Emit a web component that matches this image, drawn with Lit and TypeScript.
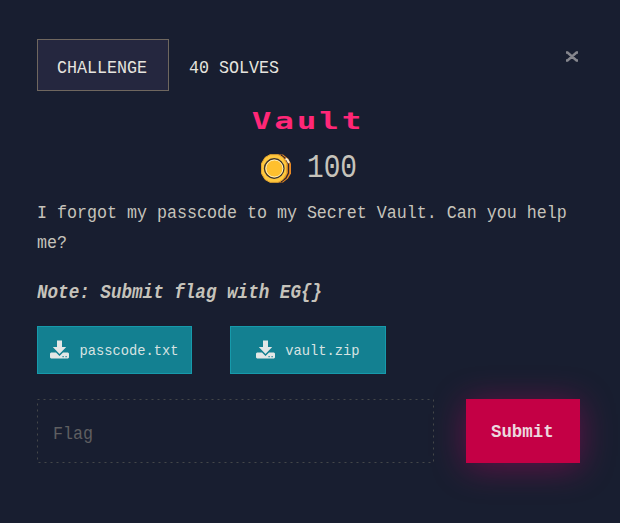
import { LitElement, html, css, svg } from "lit";
import { customElement } from "lit/decorators.js";

@customElement("app-root")
export class AppRoot extends LitElement {
  static styles = css`
    :host {
      display: block;
      box-sizing: border-box;
      width: 620px;
      height: 523px;
      padding: 39px 40px 0 37px;
      overflow: hidden;
      background: #181e30;
      color: #c6c3bb;
      font: 16.67px/30px "Liberation Mono", monospace;
    }
    * { box-sizing: border-box; }
    .tall { display: block; transform: scaleY(1.15); white-space: pre; }
    header { display: flex; height: 52px; align-items: flex-start; color: #e6e4df; }
    .tab { height: 52px; padding-top: 13px; }
    .active { width: 132px; padding-left: 19px; border: 1px solid #6f675f; background: #25273f; }
    .solves { padding: 14px 0 0 20px; flex: 1; }
    .close { margin: 12px 1px 0 0; width: 14px; height: 11px; }
    svg { display: block; }
    h1 {
      margin: 14px 4px 0 0;
      height: 32px;
      text-align: center;
      color: #ff2777;
      font: bold 23px/32px "DejaVu Sans Mono", monospace;
      letter-spacing: 2px;
      text-indent: 2px;
      transform: scaleX(1.42);
    }
    .score { display: flex; height: 32px; margin: 15px 0 0 224px; gap: 15px; }
    .coin { margin-top: 2px; }
    .points { font-size: 27.8px; line-height: 32px; transform: scaleY(1.22); }
    p { margin: 0; }
    .body { margin-top: 14px; }
    .note { margin-top: 19px; font: italic bold 17.6px/30px "Liberation Mono", monospace; }
    .files { display: flex; gap: 38px; margin-top: 19px; }
    .file {
      display: flex;
      align-items: center;
      justify-content: center;
      gap: 10px;
      height: 48px;
      width: 155px;
      border: 1px solid #169aab;
      background: #138091;
      color: #d7e3e2;
      font-size: 13.75px;
    }
    .label { padding-top: 4px; }
    .zip { width: 156px; }
    .file .icon { margin-bottom: 1px; }
    form { display: flex; justify-content: space-between; margin-top: 25px; }
    .flag { width: 397px; height: 64px; padding: 20px 0 0 16px; color: #5f5f61; }
    .field { position: relative; height: 64px; }
    .outline { position: absolute; inset: 0; }
    .submit {
      width: 114px;
      height: 64px;
      padding: 4px 0 0 25px;
      border: 0;
      background: #c40045;
      color: #ecd8df;
      text-align: left;
      font: bold 17.4px/60px "Liberation Mono", monospace;
      box-shadow: 0 4px 34px rgba(196, 0, 99, 0.45);
    }
    .submit .tall { transform: scaleY(1.1); }
  `;

  private icon() {
    return svg`<svg class="icon" width="19" height="19" viewBox="0 0 19 19" fill="#e3e7e6">
      <path d="M7 0.500h5v6.500h4.200L9.500 14 2.800 7H7z"/>
      <path fill-rule="evenodd" d="M1 12.500h5l3.500 3.500 3.500-3.500h5l1 1v4l-1 1H1l-1-1v-4zM12.500 16v1.200h1.200V16zM15.500 16v1.200h1.200V16z"/>
    </svg>`;
  }

  private coin() {
    return svg`<svg class="coin" width="31" height="29" viewBox="0 0 31 29">
      <path fill="#e98a25" d="M17 0.500h5l5 4 3 5v10l-3 5-5 4h-5z"/>
      <path fill="none" stroke="#30262b" stroke-width="1.300" d="M20 1l5 4 2.500 5v9L25 24l-5 4"/>
      <path fill="none" stroke="#fff0cf" stroke-width="2" d="M24.500 4.500l2 1.500 1.500 3"/>
      <path fill="#ffc83f" stroke="#e5a72f" d="M9 0.700h8l5 2.800 3.500 6v10l-3.500 6-5 2.800H9l-5-2.800-3.500-6v-10L4 3.500z"/>
      <circle cx="13.200" cy="14.500" r="9.700" fill="#ffc02e" stroke="#3d3430" stroke-width="1.400"/>
      <circle cx="13.400" cy="14.500" r="8.500" fill="none" stroke="#fff0bf"/>
    </svg>`;
  }

  render() {
    return html`
      <header>
        <div class="tab active"><span class="tall">CHALLENGE</span></div>
        <div class="solves"><span class="tall">40 SOLVES</span></div>
        <svg class="close" viewBox="0 0 14 11" stroke="#85868d" stroke-width="2.4">
          <path d="M1 1.500h1.500l9 8h1.500M1 9.500h1.500l9-8h1.500" fill="none"/>
        </svg>
      </header>
      <h1>Vault</h1>
      <div class="score">${this.coin()}<span class="points">100</span></div>
      <p class="body">
        <span class="tall">I forgot my passcode to my Secret Vault. Can you help</span>
        <span class="tall">me?</span>
      </p>
      <p class="note"><span class="tall">Note: Submit flag with EG{}</span></p>
      <div class="files">
        <div class="file">${this.icon()}<span class="label">passcode.txt</span></div>
        <div class="file zip">${this.icon()}<span class="label">vault.zip</span></div>
      </div>
      <form>
        <div class="field">
          <svg class="outline" width="397" height="64" fill="none" stroke="#444749" stroke-dasharray="2 4">
            <rect x="0.5" y="0.5" width="396" height="63"/>
          </svg>
          <div class="flag"><span class="tall">Flag</span></div>
        </div>
        <button class="submit" type="button"><span class="tall">Submit</span></button>
      </form>
    `;
  }
}
